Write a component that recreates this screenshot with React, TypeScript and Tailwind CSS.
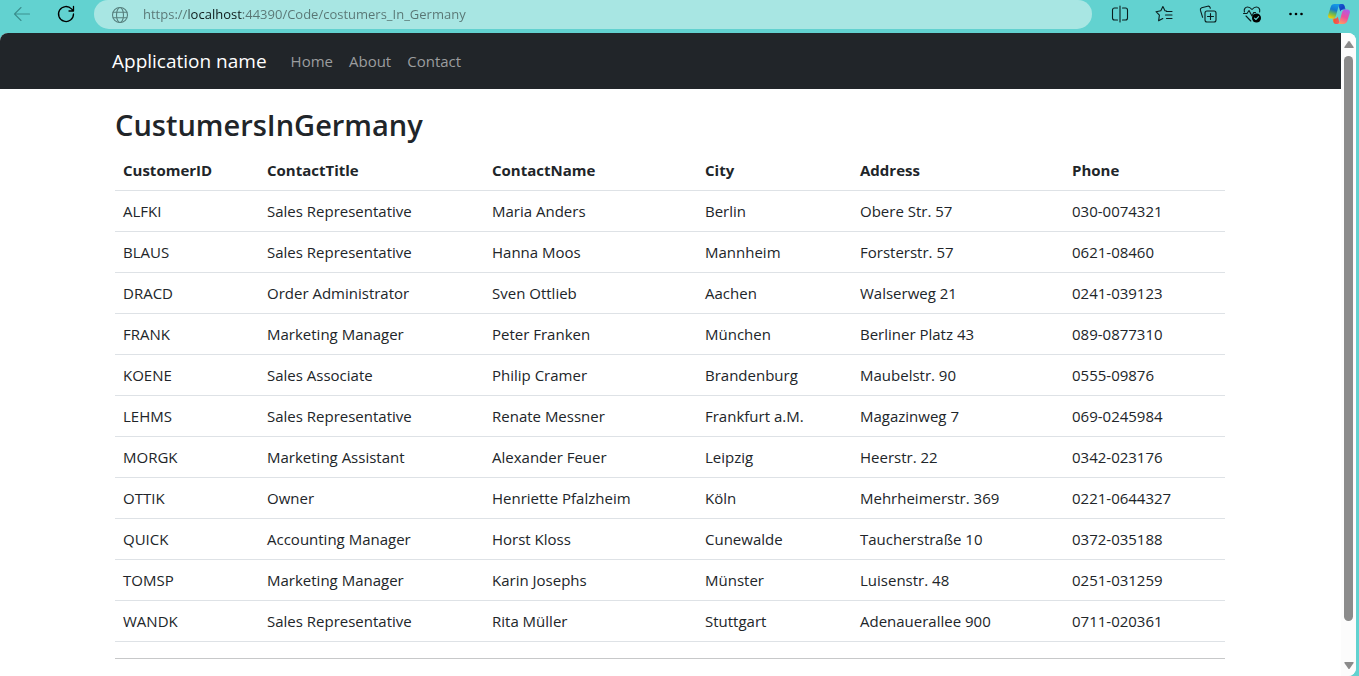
import type { ReactNode } from "react";

const NAV_LINKS = ["Home", "About", "Contact"];

const COLUMNS = [
  { title: "CustomerID", width: "w-[144px]" },
  { title: "ContactTitle", width: "w-[225px]" },
  { title: "ContactName", width: "w-[213px]" },
  { title: "City", width: "w-[155px]" },
  { title: "Address", width: "w-[212px]" },
  { title: "Phone", width: "" },
];

const CUSTOMERS = [
  ["ALFKI", "Sales Representative", "Maria Anders", "Berlin", "Obere Str. 57", "030-0074321"],
  ["BLAUS", "Sales Representative", "Hanna Moos", "Mannheim", "Forsterstr. 57", "0621-08460"],
  ["DRACD", "Order Administrator", "Sven Ottlieb", "Aachen", "Walserweg 21", "0241-039123"],
  ["FRANK", "Marketing Manager", "Peter Franken", "München", "Berliner Platz 43", "089-0877310"],
  ["KOENE", "Sales Associate", "Philip Cramer", "Brandenburg", "Maubelstr. 90", "0555-09876"],
  ["LEHMS", "Sales Representative", "Renate Messner", "Frankfurt a.M.", "Magazinweg 7", "069-0245984"],
  ["MORGK", "Marketing Assistant", "Alexander Feuer", "Leipzig", "Heerstr. 22", "0342-023176"],
  ["OTTIK", "Owner", "Henriette Pfalzheim", "Köln", "Mehrheimerstr. 369", "0221-0644327"],
  ["QUICK", "Accounting Manager", "Horst Kloss", "Cunewalde", "Taucherstraße 10", "0372-035188"],
  ["TOMSP", "Marketing Manager", "Karin Josephs", "Münster", "Luisenstr. 48", "0251-031259"],
  ["WANDK", "Sales Representative", "Rita Müller", "Stuttgart", "Adenauerallee 900", "0711-020361"],
];

function Icon({ children, className = "size-5" }: { children: ReactNode; className?: string }) {
  return (
    <svg
      viewBox="0 0 20 20"
      className={className}
      fill="none"
      stroke="currentColor"
      strokeWidth="1.1"
      strokeLinecap="round"
      strokeLinejoin="round"
      aria-hidden="true"
    >
      {children}
    </svg>
  );
}

function CopilotLogo() {
  return (
    <svg viewBox="0 0 22 20" className="h-5 w-[22px]" aria-hidden="true">
      <defs>
        <linearGradient id="cpLeft" x1="0.6" y1="0" x2="0.3" y2="1">
          <stop offset="0" stopColor="#159be8" />
          <stop offset="0.4" stopColor="#1479cf" />
          <stop offset="0.65" stopColor="#62b45c" />
          <stop offset="1" stopColor="#f6d300" />
        </linearGradient>
        <linearGradient id="cpTop" x1="0" y1="0" x2="1" y2="1">
          <stop offset="0" stopColor="#1767d8" />
          <stop offset="0.6" stopColor="#1440c0" />
          <stop offset="1" stopColor="#2d8cf0" />
        </linearGradient>
        <linearGradient id="cpRight" x1="0.7" y1="0" x2="0.3" y2="1">
          <stop offset="0" stopColor="#b15be8" />
          <stop offset="0.5" stopColor="#ec4f9c" />
          <stop offset="1" stopColor="#ff9a62" />
        </linearGradient>
        <linearGradient id="cpBottom" x1="0" y1="0" x2="1" y2="0.4">
          <stop offset="0" stopColor="#ffb84d" />
          <stop offset="0.4" stopColor="#f4552f" />
          <stop offset="1" stopColor="#f0566b" />
        </linearGradient>
      </defs>
      <path d="M10 0h4.2c1.3 0 2 .8 2.4 2l1 3.400h-2.400c-1.500 0-2.400.7-2.900 2.200z" fill="url(#cpTop)" />
      <path d="M12 20H7.800c-1.300 0-2-.8-2.400-2l-1-3.400h2.400c1.500 0 2.400-.7 2.900-2.200z" fill="url(#cpBottom)" />
      <path d="M6.400 0h6.400c-1.300.2-1.900 1-2.300 2.400L8 11.600c-.6 2-1.500 3-3.400 3H2.600C.5 14.600-.3 13 .2 11l2.400-7.800C3.200 1.200 4.400 0 6.400 0z" fill="url(#cpLeft)" />
      <path d="M15.600 20H9.200c1.300-.2 1.900-1 2.300-2.400L14 8.400c.6-2 1.500-3 3.400-3h2c2.100 0 2.900 1.600 2.400 3.600L19.400 16.800c-.6 2-1.800 3.200-3.800 3.200z" fill="url(#cpRight)" />
    </svg>
  );
}

function ToolButton({ label, children }: { label: string; children: ReactNode }) {
  return (
    <button type="button" aria-label={label} className="flex h-7 w-11 items-center justify-center">
      {children}
    </button>
  );
}

function BrowserBar() {
  return (
    <header className="flex h-[33px] shrink-0 items-start text-[#0b1f1f]">
      <div className="flex h-7 w-[94px] shrink-0 items-center">
        <button type="button" aria-label="Back" className="flex w-11 justify-center text-[#3b8f8e]">
          <Icon>
            <path d="M17.500 10H2.500M9 3.500 2.500 10 9 16.500" />
          </Icon>
        </button>
        <button type="button" aria-label="Refresh" className="flex w-11 justify-center text-black">
          <Icon>
            <path d="M17.500 10a7.500 7.500 0 1 1-2-5.100L17.300 7M17.500 2.500V7h-4.500" strokeWidth="1.300" />
          </Icon>
        </button>
      </div>
      <div className="flex h-[29px] min-w-0 flex-1 items-center gap-[13px] rounded-b-[15px] rounded-t-[14px] bg-[#a8e6e3] pl-4 pr-4">
        <Icon className="size-5 shrink-0 text-[#57807e]">
          <circle cx="10" cy="10" r="7.500" />
          <ellipse cx="10" cy="10" rx="3.500" ry="7.500" />
          <path d="M3.200 7.300h13.600M3.200 12.700h13.600" />
        </Icon>
        <input
          type="text"
          aria-label="Address"
          defaultValue="https://localhost:44390/Code/costumers_In_Germany"
          className="min-w-0 flex-1 bg-[linear-gradient(to_right,#587573_46px,#0c1a1a_46px,#0c1a1a_99px,#587573_99px)] bg-clip-text text-[13px] text-transparent outline-none"
        />
      </div>
      <div className="flex shrink-0 items-center pl-[6px]">
        <ToolButton label="Split screen">
          <Icon>
            <path d="M10 2v16M7.500 4H4.500A2 2 0 0 0 2.500 6v8a2 2 0 0 0 2 2h3M12.500 4h3a2 2 0 0 1 2 2v8a2 2 0 0 1-2 2h-3" />
          </Icon>
        </ToolButton>
        <ToolButton label="Favorites">
          <Icon>
            <path d="M12.500 7 11 6.800 8.900 2.600 6.800 6.800 2 7.700l3.400 3.500-.8 5.600 4.200-2.200M12.500 7.500H18M11.500 11H18M12.500 14.500H18" />
          </Icon>
        </ToolButton>
        <ToolButton label="Collections">
          <Icon>
            <rect x="7" y="7" width="11" height="11" rx="2" />
            <path d="M12.500 9.500v6M9.500 12.500h6M4.600 13.300 2.400 6.200a2 2 0 0 1 1.300-2.400l6-1.600a2 2 0 0 1 2.400 1.300l.2.800" />
          </Icon>
        </ToolButton>
        <ToolButton label="Browser essentials">
          <Icon>
            <path d="M2.400 8C1.600 4.800 3.400 3 5.600 3 7.500 3 8.700 4 10 5.500 11.300 4 12.500 3 14.400 3c2.200 0 4 1.800 3.200 5M1.500 9.500H5l2-3 3 5.500 1.700-3.500h1.800M4 12l4.800 5" />
            <circle cx="14.500" cy="14" r="4.500" fill="black" stroke="none" />
            <path d="m12.500 14.200 1.400 1.300 2.700-2.800" stroke="#62d2d0" />
          </Icon>
        </ToolButton>
        <ToolButton label="Settings and more">
          <Icon>
            <g fill="black" stroke="none">
              <circle cx="4.500" cy="10" r="1.300" />
              <circle cx="10" cy="10" r="1.300" />
              <circle cx="15.500" cy="10" r="1.300" />
            </g>
          </Icon>
        </ToolButton>
        <button type="button" aria-label="Copilot" className="flex h-7 w-[41px] items-center justify-center">
          <CopilotLogo />
        </button>
      </div>
    </header>
  );
}

function ScrollTrack() {
  return (
    <div className="flex w-[15px] shrink-0 flex-col items-center bg-[#fcfcfc] pt-2 text-[#8b8b8b]" aria-hidden="true">
      <svg viewBox="0 0 10 7" className="h-[7px] w-[10px] shrink-0" fill="currentColor">
        <path d="M4.200.6a1 1 0 0 1 1.600 0L9.600 6c.3.500 0 1-.6 1H1C.4 7 .1 6.500.4 6z" />
      </svg>
      <div className="mt-2 w-[9px] flex-1 rounded-full bg-[#8b8b8b]" />
      <svg viewBox="0 0 10 7" className="mb-[7px] mt-[41px] h-[7px] w-[10px] shrink-0" fill="currentColor">
        <path d="M4.200 6.400a1 1 0 0 0 1.600 0L9.600 1c.3-.5 0-1-.6-1H1C.4 0 .1.500.4 1z" />
      </svg>
    </div>
  );
}

export default function App() {
  return (
    <div className="flex h-screen flex-col bg-[#62d2d0] font-['Open_Sans','Noto_Sans',sans-serif] text-[#212529]">
      <BrowserBar />
      <div className="mr-[3px] flex min-h-0 flex-1 overflow-hidden rounded-tl-lg rounded-r-lg bg-white">
        <div className="min-w-0 flex-1 overflow-hidden">
          <nav className="bg-[#212529]">
            <div className="mx-auto flex h-14 max-w-[1141px] items-center px-3">
              <a href="#" className="mr-4 text-[19px] text-white">
                Application name
              </a>
              <ul className="flex">
                {NAV_LINKS.map((link) => (
                  <li key={link}>
                    <a href="#" className="block px-2 py-2 text-[15px] text-[#9b9d9f]">
                      {link}
                    </a>
                  </li>
                ))}
              </ul>
            </div>
          </nav>
          <main className="mx-auto max-w-[1141px] pl-[15px] pr-4 pt-4">
            <h2 className="mb-[5px] text-[29px] font-semibold leading-10">CustumersInGermany</h2>
            <table className="w-full table-fixed border-collapse text-left text-[15px] leading-6">
              <thead>
                <tr className="border-b border-[#dee2e6]">
                  {COLUMNS.map((column) => (
                    <th key={column.title} scope="col" className={`${column.width} p-2 font-bold`}>
                      {column.title}
                    </th>
                  ))}
                </tr>
              </thead>
              <tbody>
                {CUSTOMERS.map((row) => (
                  <tr key={row[0]} className="border-b border-[#dee2e6]">
                    {row.map((cell, index) => (
                      <td key={index} className="p-2">
                        {cell}
                      </td>
                    ))}
                  </tr>
                ))}
              </tbody>
            </table>
            <hr className="mt-4 border-[#c7c8c9]" />
          </main>
        </div>
        <ScrollTrack />
      </div>
    </div>
  );
}
